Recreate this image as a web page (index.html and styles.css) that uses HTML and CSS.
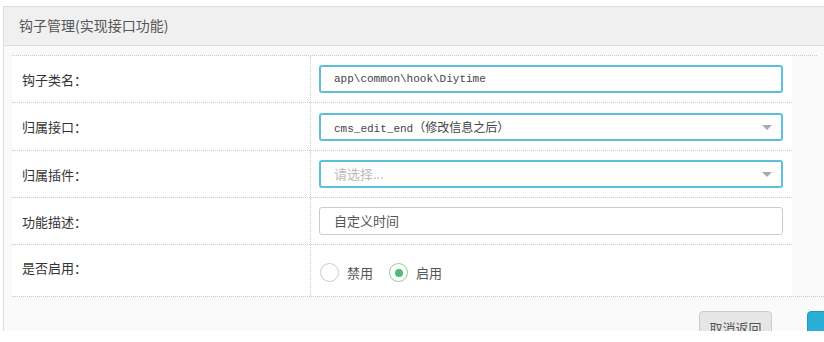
FILE: index.html
```html
<!DOCTYPE html>
<html lang="zh-CN">
<head>
  <meta charset="UTF-8">
  <title>钩子管理</title>
  <link rel="stylesheet" href="styles.css">
</head>
<body>
  <div class="page">
    <div class="panel">
      <div class="panel-head">钩子管理(实现接口功能)</div>
      <div class="panel-body">
        <div class="form-wrap">
          <div class="form-table">
            <div class="row">
              <div class="label">钩子类名：</div>
              <div class="field">
                <div class="input focus mono">app\common\hook\Diytime</div>
              </div>
            </div>
            <div class="row row-tall">
              <div class="label">归属接口：</div>
              <div class="field">
                <div class="input select focus mono">cms_edit_end<span class="cjk">（修改信息之后）</span><span class="arrow"></span></div>
              </div>
            </div>
            <div class="row">
              <div class="label">归属插件：</div>
              <div class="field">
                <div class="input select focus placeholder">请选择...<span class="arrow"></span></div>
              </div>
            </div>
            <div class="row">
              <div class="label">功能描述：</div>
              <div class="field">
                <div class="input">自定义时间</div>
              </div>
            </div>
            <div class="row row-last">
              <div class="label">是否启用：</div>
              <div class="field radios">
                <label class="radio"><span class="dot"></span>禁用</label>
                <label class="radio checked"><span class="dot"></span>启用</label>
              </div>
            </div>
          </div>
        </div>
        <div class="panel-foot">
          <button class="btn btn-default">取消返回</button>
          <button class="btn btn-primary">确定提交</button>
        </div>
      </div>
    </div>
  </div>
</body>
</html>
```

FILE: styles.css
```css
* {
  margin: 0;
  padding: 0;
  box-sizing: border-box;
}
body {
  background: #fff;
  font-family: "Noto Sans CJK SC", "Noto Sans", sans-serif;
  font-size: 13px;
  color: #333;
}
.page {
  height: 331px;
  padding: 6px 0 0 3px;
  overflow: hidden;
}
.panel {
  border-top: 1px solid #ddd;
  border-left: 1px solid #ddd;
  background: #fafafa;
  height: 100%;
}
.panel-head {
  height: 39px;
  line-height: 37px;
  padding-left: 15px;
  background: #f0f0f0;
  border-bottom: 1px solid #dcdcdc;
  font-size: 14px;
  color: #555;
}
.panel-body {
  padding: 9px 0 0 8px;
}
.form-wrap {
  margin-right: 7px;
  border-top: 1px dotted #ccc;
}
.form-table {
  width: 780px;
  background: #fff;
}
.row {
  display: grid;
  grid-template-columns: 299px 1fr;
  height: 47px;
  border-bottom: 1px dotted #ccc;
}
.row-tall {
  height: 48px;
}
.row-last {
  height: 51px;
  border-bottom: none;
}
.label {
  display: flex;
  align-items: center;
  padding-left: 10px;
  border-right: 1px dotted #ccc;
  color: #333;
}
.row-last .label {
  padding-bottom: 6px;
}
.field {
  display: flex;
  align-items: center;
  padding-left: 8px;
}
.input {
  position: relative;
  width: 464px;
  height: 28px;
  line-height: 26px;
  padding-left: 14px;
  border: 1px solid #ccc;
  border-radius: 3px;
  color: #555;
  white-space: nowrap;
}
.input.focus {
  border: 2px solid #5cc0dc;
  line-height: 24px;
  padding-left: 13px;
}
.mono {
  font-family: "Liberation Mono", "Noto Sans CJK SC", monospace;
  font-size: 11px;
  color: #444;
}
.cjk {
  font-family: "Noto Sans CJK SC", sans-serif;
  font-size: 12px;
}
.placeholder {
  color: #bbb;
}
.arrow {
  position: absolute;
  right: 9px;
  top: 10px;
  width: 0;
  height: 0;
  border-left: 5px solid transparent;
  border-right: 5px solid transparent;
  border-top: 5px solid #aaa;
}
.radios {
  gap: 16px;
  padding-left: 9px;
  padding-top: 4px;
}
.radio {
  display: flex;
  align-items: center;
  gap: 8px;
  color: #555;
}
.dot {
  width: 19px;
  height: 19px;
  border: 1.5px solid #ccc;
  border-radius: 50%;
  display: flex;
  align-items: center;
  justify-content: center;
}
.radio.checked .dot {
  border-color: #8ccf9c;
  box-shadow: inset 0 0 0 2px #fff;
}
.radio.checked .dot::after {
  content: "";
  width: 8px;
  height: 8px;
  border-radius: 50%;
  background: #4dbb72;
}
.panel-foot {
  border-top: 1px dotted #ccc;
  padding: 14px 0 0 687px;
  display: flex;
  gap: 35px;
}
.btn {
  flex-shrink: 0;
  height: 32px;
  border-radius: 4px;
  font-family: "Noto Sans CJK SC", sans-serif;
  font-size: 13px;
  white-space: nowrap;
}
.btn-default {
  width: 73px;
  background: #e6e6e6;
  border: 1px solid #ccc;
  color: #555;
}
.btn-primary {
  width: 90px;
  padding-left: 20px;
  background: #2aaed6;
  border: 1px solid #2399bf;
  color: #fff;
}
```
